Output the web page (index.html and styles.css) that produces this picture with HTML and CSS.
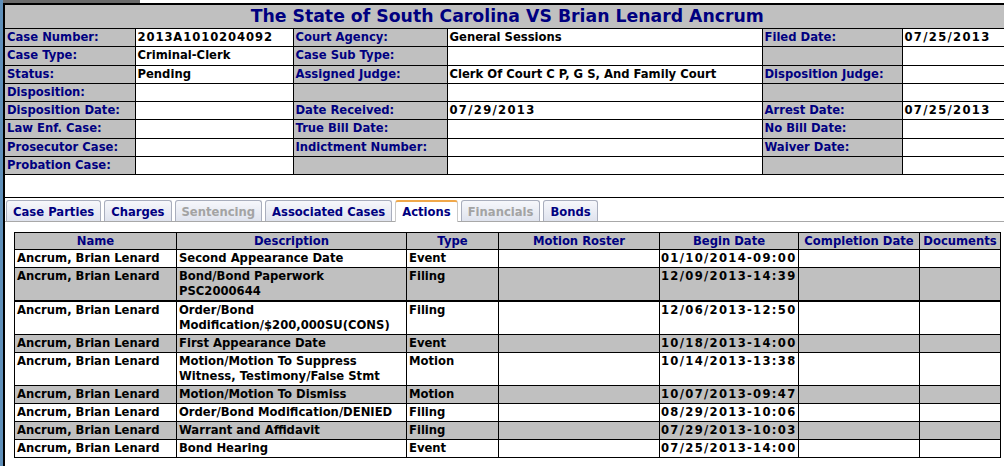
FILE: index.html
```html
<!DOCTYPE html>
<html>
<head>
<meta charset="utf-8">
<link rel="stylesheet" href="styles.css">
</head>
<body>
<div class="topstrip"><div class="topstrip-dark"></div></div>
<div class="panel">
  <table class="info">
    <colgroup>
      <col style="width:130px"><col style="width:158px"><col style="width:154px"><col style="width:315px"><col style="width:140px"><col style="width:108px">
    </colgroup>
    <tr><td class="title" colspan="6">The State of South Carolina VS Brian Lenard Ancrum</td></tr>
    <tr><td class="lbl">Case Number:</td><td class="val cn">2013A1010204092</td><td class="lbl">Court Agency:</td><td class="val">General Sessions</td><td class="lbl">Filed Date:</td><td class="val num">07/25/2013</td></tr>
    <tr><td class="lbl">Case Type:</td><td class="val">Criminal-Clerk</td><td class="lbl">Case Sub Type:</td><td class="val"></td><td class="lbl"></td><td class="val"></td></tr>
    <tr><td class="lbl">Status:</td><td class="val">Pending</td><td class="lbl">Assigned Judge:</td><td class="val">Clerk Of Court C P, G S, And Family Court</td><td class="lbl">Disposition Judge:</td><td class="val"></td></tr>
    <tr><td class="lbl">Disposition:</td><td class="val"></td><td class="lbl"></td><td class="val"></td><td class="lbl"></td><td class="val"></td></tr>
    <tr><td class="lbl">Disposition Date:</td><td class="val"></td><td class="lbl">Date Received:</td><td class="val num">07/29/2013</td><td class="lbl">Arrest Date:</td><td class="val num">07/25/2013</td></tr>
    <tr><td class="lbl">Law Enf. Case:</td><td class="val"></td><td class="lbl">True Bill Date:</td><td class="val"></td><td class="lbl">No Bill Date:</td><td class="val"></td></tr>
    <tr><td class="lbl">Prosecutor Case:</td><td class="val"></td><td class="lbl">Indictment Number:</td><td class="val"></td><td class="lbl">Waiver Date:</td><td class="val"></td></tr>
    <tr><td class="lbl">Probation Case:</td><td class="val"></td><td class="lbl"></td><td class="val"></td><td class="lbl"></td><td class="val"></td></tr>
  </table>

  <div class="tabsection">
    <div class="tabs">
      <span class="tab">Case Parties</span>
      <span class="tab">Charges</span>
      <span class="tab disabled">Sentencing</span>
      <span class="tab">Associated Cases</span>
      <span class="tab active">Actions</span>
      <span class="tab disabled">Financials</span>
      <span class="tab">Bonds</span>
    </div>
    <div class="tabbody">
      <table class="actions">
        <colgroup>
          <col style="width:162px"><col style="width:230px"><col style="width:92px"><col style="width:161px"><col style="width:139px"><col style="width:121px"><col style="width:81px">
        </colgroup>
        <tr class="head"><th>Name</th><th>Description</th><th>Type</th><th>Motion Roster</th><th>Begin Date</th><th>Completion Date</th><th>Documents</th></tr>
        <tr><td>Ancrum, Brian Lenard</td><td>Second Appearance Date</td><td>Event</td><td></td><td class="num">01/10/2014-09:00</td><td></td><td></td></tr>
        <tr class="alt"><td>Ancrum, Brian Lenard</td><td>Bond/Bond Paperwork PSC2000644</td><td>Filing</td><td></td><td class="num">12/09/2013-14:39</td><td></td><td></td></tr>
        <tr class="thick"><td>Ancrum, Brian Lenard</td><td>Order/Bond Modification/$200,000SU(CONS)</td><td>Filing</td><td></td><td class="num">12/06/2013-12:50</td><td></td><td></td></tr>
        <tr class="alt"><td>Ancrum, Brian Lenard</td><td>First Appearance Date</td><td>Event</td><td></td><td class="num">10/18/2013-14:00</td><td></td><td></td></tr>
        <tr><td>Ancrum, Brian Lenard</td><td>Motion/Motion To Suppress Witness, Testimony/False Stmt</td><td>Motion</td><td></td><td class="num">10/14/2013-13:38</td><td></td><td></td></tr>
        <tr class="alt"><td>Ancrum, Brian Lenard</td><td>Motion/Motion To Dismiss</td><td>Motion</td><td></td><td class="num">10/07/2013-09:47</td><td></td><td></td></tr>
        <tr><td>Ancrum, Brian Lenard</td><td>Order/Bond Modification/DENIED</td><td>Filing</td><td></td><td class="num">08/29/2013-10:06</td><td></td><td></td></tr>
        <tr class="alt"><td>Ancrum, Brian Lenard</td><td>Warrant and Affidavit</td><td>Filing</td><td></td><td class="num">07/29/2013-10:03</td><td></td><td></td></tr>
        <tr><td>Ancrum, Brian Lenard</td><td>Bond Hearing</td><td>Event</td><td></td><td class="num">07/25/2013-14:00</td><td></td><td></td></tr>
      </table>
    </div>
  </div>
</div>
</body>
</html>
```

FILE: styles.css
```css
html, body {
  margin: 0;
  padding: 0;
}
body {
  width: 1004px;
  height: 466px;
  overflow: hidden;
  background: #5f8fb9;
  font-family: "DejaVu Sans", Verdana, sans-serif;
  font-weight: bold;
  font-size: 11.6px;
  color: #000;
}
.topstrip {
  height: 3px;
  margin-left: 3px;
  width: 1010px;
  background: #fff;
}
.topstrip-dark {
  width: 137px;
  height: 3px;
  background: #6b6b6b;
}
.panel {
  margin-left: 3px;
  width: 1010px;
  height: 470px;
  background: #fff;
  border-left: 2px solid #000;
  border-top: 2px solid #000;
}
.info {
  border-collapse: collapse;
  table-layout: fixed;
  width: 1005px;
}
.info td {
  border: 1px solid #000;
  height: 17.25px;
  padding: 0 2px;
  line-height: 15px;
  white-space: nowrap;
  overflow: hidden;
  vertical-align: middle;
}
.info tr:first-child td { border-top: none; }
.info td:first-child { border-left: none; }
.info .title {
  background: #c0c0c0;
  color: #000080;
  font-size: 17.3px;
  text-align: center;
  height: 23px;
  padding: 0;
  line-height: 23px;
}
.info .lbl {
  background: #c0c0c0;
  color: #000080;
}
.info .val {
  background: #fff;
  color: #000;
}
.num {
  letter-spacing: 1.3px;
}
.cn {
  letter-spacing: 0.9px;
}
.tabsection {
  margin-top: 22px;
  border-top: 1px solid #000;
  padding-top: 2px;
}
.tabs {
  display: flex;
  gap: 3px;
  padding-left: 1px;
  border-bottom: 1px solid #a8a8a8;
  height: 21px;
}
.tab {
  display: block;
  height: 20px;
  line-height: 22px;
  padding: 0 6px;
  border: 1px solid #a9aebd;
  border-bottom: none;
  border-radius: 3px 3px 0 0;
  background: linear-gradient(#f6f7fb, #dfe3ee);
  color: #000080;
}
.tab.disabled {
  color: #a3a3a3;
}
.tab.active {
  background: #fff;
  border-color: #c9c9c9;
  border-top: 2px solid #f0a84a;
  line-height: 21px;
  margin-bottom: -1px;
  height: 20px;
}
.tabbody {
  padding: 10px 0 0 9px;
}
.actions {
  border-collapse: collapse;
  table-layout: fixed;
  width: 986px;
  border: 1px solid #000;
}
.actions th, .actions td {
  border: 1px solid #000;
  padding: 1px 2px;
  line-height: 15px;
  vertical-align: top;
  text-align: left;
  white-space: normal;
}
.actions td.num {
  white-space: nowrap;
  padding-left: 1px;
}
.actions th {
  background: #c0c0c0;
  color: #000080;
  text-align: center;
  line-height: 14px;
}
.actions tr.alt td {
  background: #c0c0c0;
}
.actions tr.thick td {
  border-top: 2px solid #000;
}
```
